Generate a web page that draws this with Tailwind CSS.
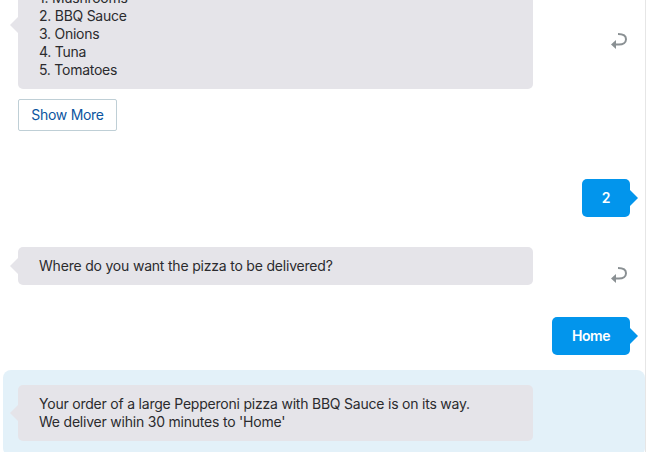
<!DOCTYPE html>
<html lang="en">
<head>
<meta charset="utf-8">
<title>Pizza bot</title>
<script src="https://cdn.jsdelivr.net/npm/@tailwindcss/browser@4"></script>
</head>
<body class="h-[452px] overflow-hidden bg-white font-['Inter',sans-serif] text-[14px] leading-[18px] tracking-[-0.2px] text-[#2b2b2e]">
<main class="flex h-[452px] w-[646px] flex-col overflow-hidden border-r border-[#e6e6e6]">
  <section class="-mt-[39px] flex shrink-0 items-center justify-between pr-[18px] pl-[18px]">
    <div class="relative flex h-32 w-[515px] flex-col justify-end rounded-[5px] bg-[#e5e4e9] px-[21px] pb-[10px] tracking-[-0.26px]">
      <svg class="absolute top-14 -left-2 h-4 w-2" viewBox="0 0 8 16" fill="#e5e4e9"><path d="M8 0 0 8l8 8z"/></svg>
      <p>1. Mushrooms</p>
      <p>2. BBQ Sauce</p>
      <p>3. Onions</p>
      <p>4. Tuna</p>
      <p>5. Tomatoes</p>
    </div>
    <svg class="mt-[33px] h-[17px] w-4" viewBox="0 0 16 17" fill="none"><path d="M7 1c5 0 8 2 8 5.200 0 3.300-3 5.300-7 5.300H4" stroke="#8a9093" stroke-width="2"/><path d="M0 11.500 5 7v9z" fill="#8a9093"/></svg>
  </section>
  <button class="mt-[10px] ml-[18px] h-8 w-[99px] shrink-0 rounded-[2px] border border-[#bfcfd6] tracking-[-0.28px] text-[#0b55a0]">Show More</button>
  <div class="relative mt-12 mr-[15px] flex h-[38px] w-12 shrink-0 items-center justify-center self-end rounded-[5px] bg-[#0295ec] font-semibold text-white">2
    <svg class="absolute top-[11px] -right-2 h-4 w-2" viewBox="0 0 8 16" fill="#0295ec"><path d="M0 0l8 8-8 8z"/></svg>
  </div>
  <section class="mt-[30px] flex shrink-0 items-center justify-between pr-[18px] pl-[18px]">
    <div class="relative flex h-[38px] w-[515px] items-center rounded-[5px] bg-[#e5e4e9] px-[21px]">
      <svg class="absolute top-[11px] -left-2 h-4 w-2" viewBox="0 0 8 16" fill="#e5e4e9"><path d="M8 0 0 8l8 8z"/></svg>
      <p>Where do you want the pizza to be delivered?</p>
    </div>
    <svg class="mt-[19px] h-[17px] w-4" viewBox="0 0 16 17" fill="none"><path d="M7 1c5 0 8 2 8 5.200 0 3.300-3 5.300-7 5.300H4" stroke="#8a9093" stroke-width="2"/><path d="M0 11.500 5 7v9z" fill="#8a9093"/></svg>
  </section>
  <div class="relative mt-8 mr-[15px] flex h-[38px] w-[78px] shrink-0 items-center justify-center self-end rounded-[5px] bg-[#0295ec] font-semibold tracking-[-0.4px] text-white">Home
    <svg class="absolute top-[11px] -right-2 h-4 w-2" viewBox="0 0 8 16" fill="#0295ec"><path d="M0 0l8 8-8 8z"/></svg>
  </div>
  <section class="mt-[15px] ml-[3px] h-[86px] shrink-0 rounded-lg bg-[#e3f1f9] p-[15px]">
    <div class="relative h-14 w-[515px] rounded-[5px] bg-[#e5e4e9] px-[21px] py-[10px] tracking-[-0.215px]">
      <svg class="absolute top-5 -left-2 h-4 w-2" viewBox="0 0 8 16" fill="#e5e4e9"><path d="M8 0 0 8l8 8z"/></svg>
      <p>Your order of a large Pepperoni pizza with BBQ Sauce is on its way.</p>
      <p>We deliver wihin 30 minutes to 'Home'</p>
    </div>
  </section>
</main>
</body>
</html>
